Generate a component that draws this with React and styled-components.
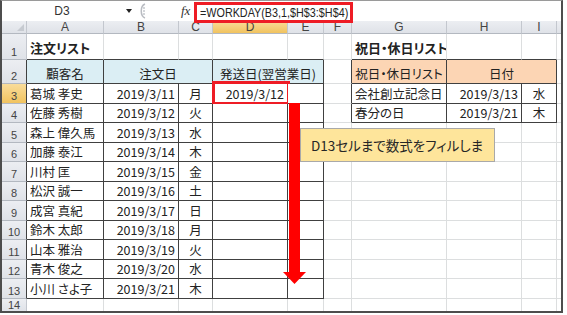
import React from "react";
import styled, { createGlobalStyle, css } from "styled-components";

const GlobalStyle = createGlobalStyle`
  html, body { margin: 0; padding: 0; background: #fff; }
  body {
    font-family: "Noto Sans CJK JP", "Liberation Sans", sans-serif;
    font-feature-settings: "palt";
    color: #222;
  }
`;

const COLS = ["A", "B", "C", "D", "E", "F", "G", "H", "I", "J"];
const WIDTHS = "25px 77px 75px 34px 75px 36px 28px 95px 75px 35px 1fr";

const orders = [
  ["葛城 孝史", "2019/3/11", "月"],
  ["佐藤 秀樹", "2019/3/12", "火"],
  ["森上 偉久馬", "2019/3/13", "水"],
  ["加藤 泰江", "2019/3/14", "木"],
  ["川村 匡", "2019/3/15", "金"],
  ["松沢 誠一", "2019/3/16", "土"],
  ["成宮 真紀", "2019/3/17", "日"],
  ["鈴木 太郎", "2019/3/18", "月"],
  ["山本 雅治", "2019/3/19", "火"],
  ["青木 俊之", "2019/3/20", "水"],
  ["小川 さよ子", "2019/3/21", "木"],
];

const BLUE = "#dbeef4";
const PEACH = "#fcd5b4";

// content of the cells that hold something, keyed "A1"
const content = {
  A1: { text: "注文リスト", bold: true },
  G1: { text: "祝日・休日リスト", bold: true },
  A2: { text: "顧客名", align: "center", bg: BLUE },
  B2: { text: "注文日", align: "center", bg: BLUE, span: 2 },
  D2: { text: "発送日(翌営業日)", align: "center", bg: BLUE, span: 2 },
  G2: { text: "祝日・休日リスト", align: "center", bg: PEACH },
  H2: { text: "日付", align: "center", bg: PEACH, span: 2 },
  D3: { text: "2019/3/12", align: "right", selected: true },
  G3: { text: "会社創立記念日" },
  H3: { text: "2019/3/13", align: "right" },
  I3: { text: "水", align: "center" },
  G4: { text: "春分の日" },
  H4: { text: "2019/3/21", align: "right" },
  I4: { text: "木", align: "center" },
};
orders.forEach(([name, date, day], i) => {
  const r = i + 3;
  content[`A${r}`] = { text: name };
  content[`B${r}`] = { text: date, align: "right" };
  content[`C${r}`] = { text: day, align: "center" };
});

const inOrders = (r, c) => r >= 2 && r <= 13 && c <= 4;
const inHolidays = (r, c) => r >= 2 && r <= 4 && c >= 6 && c <= 8;

const darkRight = (r, c) => inOrders(r, c) || inHolidays(r, c) || (c === 5 && r >= 2 && r <= 4);
const darkBottom = (r, c) =>
  inOrders(r, c) || inHolidays(r, c) || (r === 1 && (c <= 4 || (c >= 6 && c <= 8)));

const Frame = styled.div`
  width: 563px;
  height: 313px;
  box-sizing: border-box;
  border: 2px solid #4d4d4d;
  border-top: 1px solid #9a9a9a;
  display: flex;
  flex-direction: column;
  overflow: hidden;
`;

const FormulaBar = styled.div`
  height: 20px;
  flex: none;
  display: flex;
  align-items: center;
  background: #fff;
  font-family: "Liberation Sans", sans-serif;
  position: relative;
  z-index: 2;
`;

const NameBox = styled.div`
  width: 120px;
  text-align: center;
  font-size: 12px;
  color: #333;
`;

const DropArrow = styled.div`
  width: 0;
  height: 0;
  border-left: 3px solid transparent;
  border-right: 3px solid transparent;
  border-top: 4px solid #222;
  margin: 0 0 0 4px;
`;

const Grip = styled.svg`
  margin-left: 7px;
`;

const Fx = styled.span`
  margin-left: 34px;
  font-family: "Liberation Serif", serif;
  font-style: italic;
  font-size: 13px;
  color: #333;
  width: 12px;
`;

const FormulaHighlight = styled.div`
  margin-left: 1px;
  margin-top: 3px;
  height: 21px;
  width: 159px;
  box-sizing: border-box;
  border: 3px solid #ee1c25;
  display: flex;
  align-items: center;
  padding-left: 3px;
  white-space: nowrap;
  overflow: hidden;
  background: #fff;
`;

const FormulaText = styled.span`
  display: inline-block;
  font-family: "Liberation Sans", sans-serif;
  font-size: 13px;
  color: #222;
  transform: scaleX(0.83);
  transform-origin: left center;
`;

const Sheet = styled.div`
  flex: 1;
  position: relative;
  display: grid;
  grid-template-columns: ${WIDTHS};
  grid-template-rows: 13px 26px 24px repeat(11, 19.5px) 1fr;
`;

const headerBg = css`
  background: linear-gradient(#eceef2, #dfe2e8);
  border-right: 1px solid #c3c7ce;
  border-bottom: 1px solid #b3b8c0;
`;

const activeBg = css`
  background: linear-gradient(#f9dc9a, #f1c35f);
`;

const Corner = styled.div`
  ${headerBg};
  box-sizing: border-box;
  position: relative;
  &::after {
    content: "";
    position: absolute;
    right: 2px;
    bottom: 2px;
    border-left: 7px solid transparent;
    border-bottom: 7px solid #c6cad0;
  }
`;

const ColHead = styled.div`
  ${headerBg};
  ${(p) => p.$active && activeBg};
  box-sizing: border-box;
  display: flex;
  align-items: center;
  justify-content: center;
  font-family: "Liberation Sans", sans-serif;
  font-size: 12px;
  color: #444;
`;

const RowHead = styled.div`
  ${headerBg};
  ${(p) => p.$active && activeBg};
  ${(p) => p.$dark && "border-right-color: #404040;"};
  box-sizing: border-box;
  display: flex;
  align-items: flex-end;
  justify-content: center;
  padding-bottom: 1px;
  font-family: "Liberation Sans", sans-serif;
  font-size: 11px;
  line-height: 12px;
  color: #444;
`;

const Cell = styled.div`
  box-sizing: border-box;
  position: relative;
  grid-column: span ${(p) => p.$span};
  display: flex;
  align-items: flex-end;
  justify-content: ${(p) =>
    p.$align === "right" ? "flex-end" : p.$align === "center" ? "center" : "flex-start"};
  padding: 0 3px 1px 3px;
  font-size: 12.5px;
  line-height: 17px;
  font-weight: ${(p) => (p.$bold ? 700 : 400)};
  white-space: nowrap;
  overflow: ${(p) => (p.$selected ? "visible" : "hidden")};
  background: ${(p) => p.$bg || "#fff"};
  border-right: 1px solid ${(p) => (p.$r ? "#404040" : "#dcdedf")};
  border-bottom: 1px solid ${(p) => (p.$b ? "#404040" : "#dcdedf")};
  ${(p) => p.$bold && "padding-bottom: 3px; font-size: 13px;"};
  ${(p) =>
    p.$selected &&
    css`
      &::after {
        content: "";
        position: absolute;
        left: -1px;
        top: -3px;
        right: -3px;
        bottom: -2px;
        border: 3px solid #ee1c25;
        pointer-events: none;
      }
    `};
`;

const Arrow = styled.svg`
  position: absolute;
  left: 281px;
  top: 82px;
`;

const Callout = styled.div`
  position: absolute;
  left: 298px;
  top: 107px;
  width: 195px;
  height: 34px;
  box-sizing: border-box;
  background: #fee59b;
  border: 1px solid #a9a9a9;
  display: flex;
  align-items: center;
  padding-left: 10px;
  font-size: 13.5px;
  color: #262626;
  white-space: nowrap;
`;

function Row({ r }) {
  const cells = [];
  let skip = 0;
  COLS.forEach((col, c) => {
    if (skip > 0) {
      skip -= 1;
      return;
    }
    const d = content[`${col}${r}`] || {};
    const span = d.span || 1;
    skip = span - 1;
    const last = c + span - 1;
    cells.push(
      <Cell
        key={col}
        $span={span}
        $align={d.align}
        $bg={d.bg}
        $bold={d.bold}
        $selected={d.selected}
        $r={darkRight(r, last)}
        $b={darkBottom(r, c)}
      >
        {d.text}
      </Cell>
    );
  });
  return (
    <>
      <RowHead $active={r === 3} $dark={r >= 2 && r <= 13}>
        {r}
      </RowHead>
      {cells}
    </>
  );
}

export default function App() {
  const rows = Array.from({ length: 14 }, (_, i) => i + 1);
  return (
    <>
      <GlobalStyle />
      <Frame>
        <FormulaBar>
          <NameBox>D3</NameBox>
          <DropArrow />
          <Grip width="8" height="16" viewBox="0 0 8 16">
            <path d="M6 1 C1 3 1 13 6 15" fill="none" stroke="#b9bcc2" strokeWidth="1.5" />
            <circle cx="5" cy="5" r="0.8" fill="#9aa0a8" />
            <circle cx="5" cy="8" r="0.8" fill="#9aa0a8" />
            <circle cx="5" cy="11" r="0.8" fill="#9aa0a8" />
          </Grip>
          <Fx>fx</Fx>
          <FormulaHighlight>
            <FormulaText>=WORKDAY(B3,1,$H$3:$H$4)</FormulaText>
          </FormulaHighlight>
        </FormulaBar>
        <Sheet>
          <Corner />
          {COLS.map((col) => (
            <ColHead key={col} $active={col === "D"}>
              {col === "J" ? "" : col}
            </ColHead>
          ))}
          {rows.map((r) => (
            <Row key={r} r={r} />
          ))}
          <Arrow width="24" height="181" viewBox="0 0 24 181">
            <rect x="6" y="0" width="11" height="170" fill="#ff0000" />
            <polygon points="0,169 23,169 11.5,181" fill="#ff0000" />
          </Arrow>
          <Callout>D13セルまで数式をフィルしま</Callout>
        </Sheet>
      </Frame>
    </>
  );
}
